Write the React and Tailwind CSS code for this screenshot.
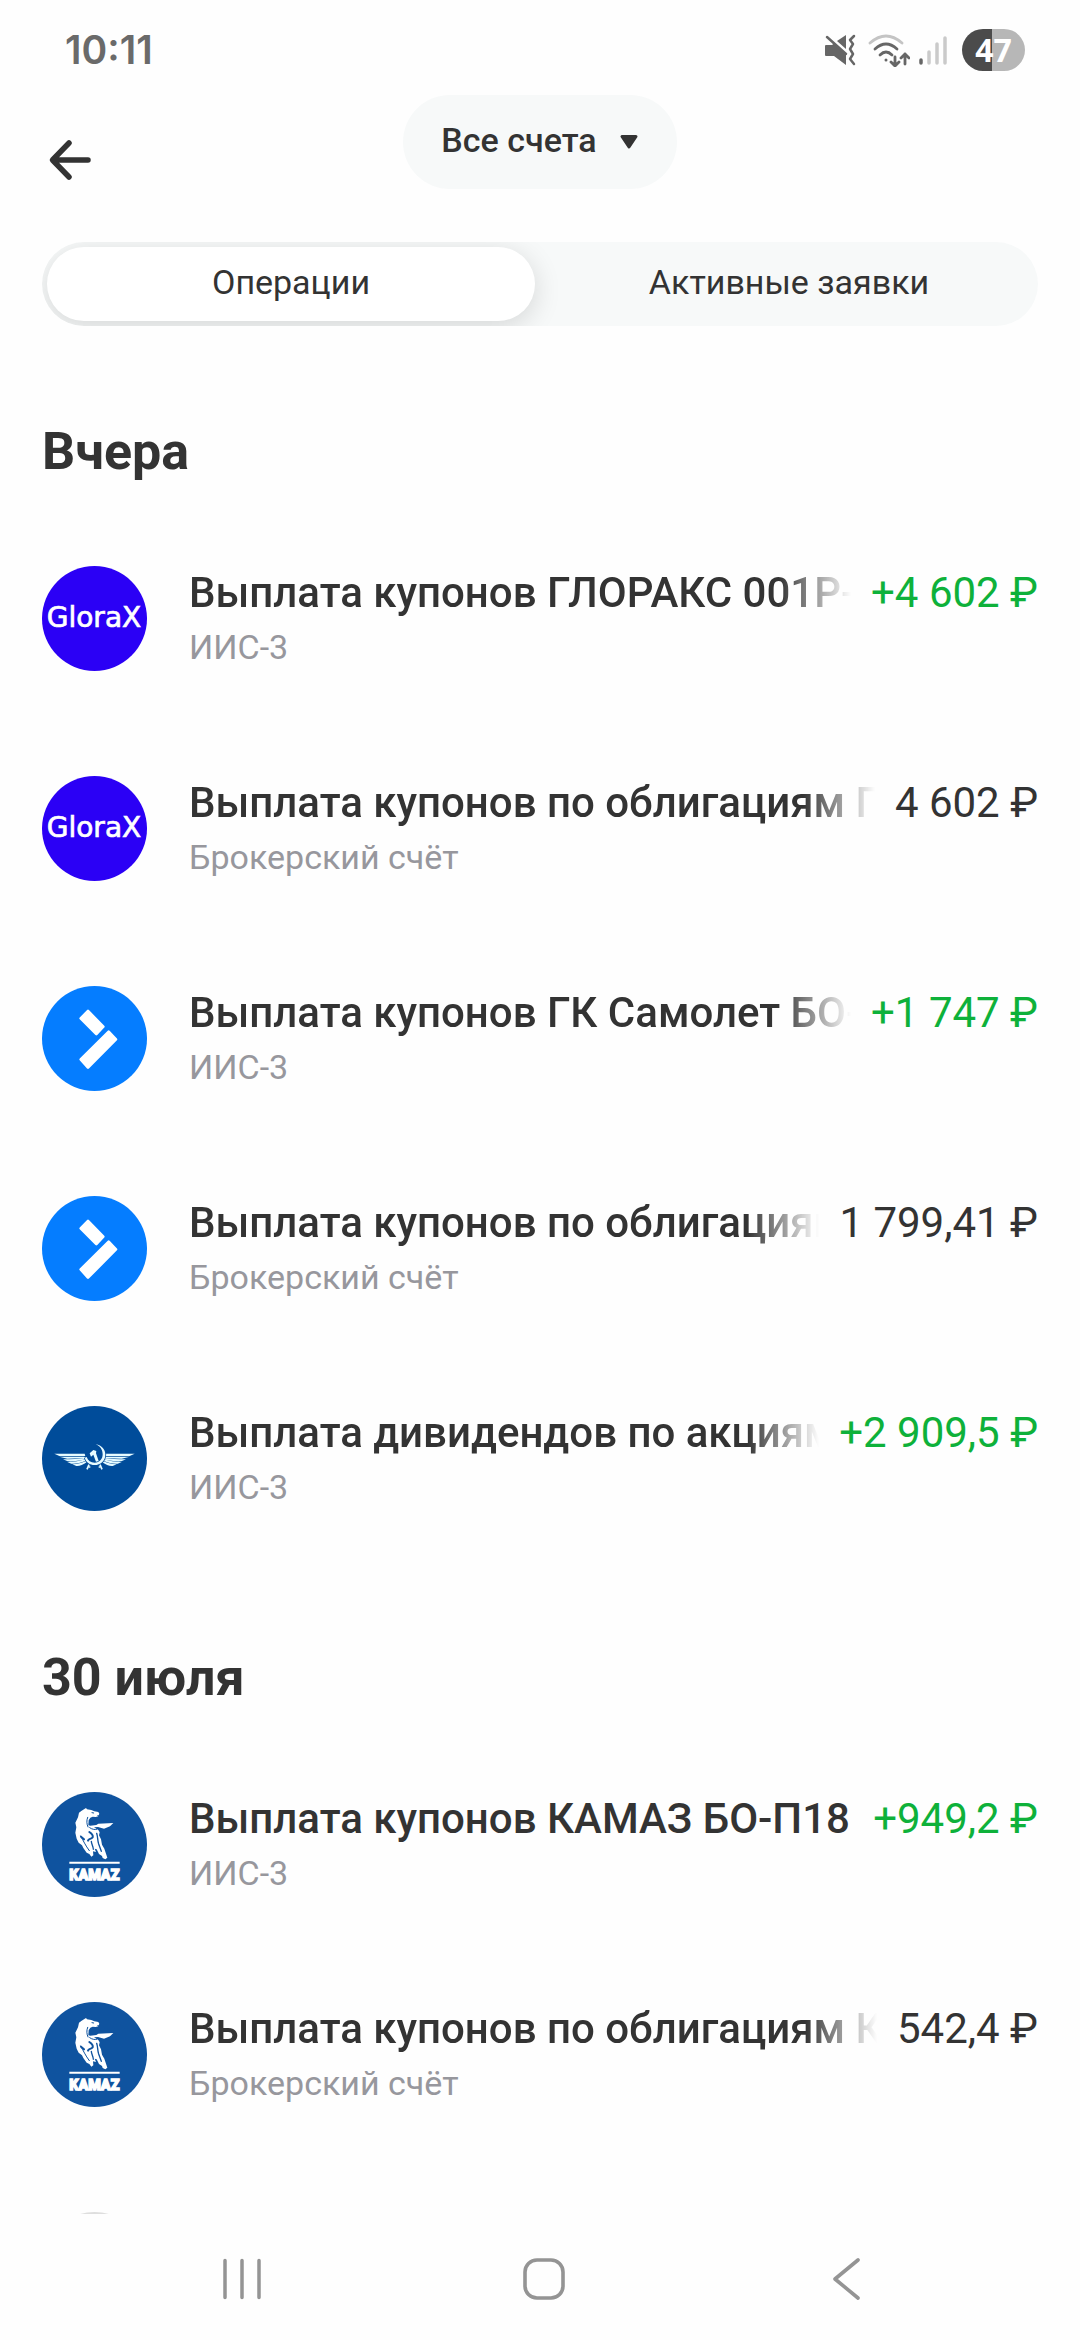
import { useState, useLayoutEffect, useRef } from "react";

const SECTIONS = [
  {
    title: "Вчера",
    items: [
      { id: 1, logo: "glorax", title: "Выплата купонов ГЛОРАКС 001Р-0", account: "ИИС-3", amount: "+4 602 ₽", income: true },
      { id: 2, logo: "glorax", title: "Выплата купонов по облигациям Г", account: "Брокерский счёт", amount: "4 602 ₽" },
      { id: 3, logo: "samolet", title: "Выплата купонов ГК Самолет БО-", account: "ИИС-3", amount: "+1 747 ₽", income: true },
      { id: 4, logo: "samolet", title: "Выплата купонов по облигациям", account: "Брокерский счёт", amount: "1 799,41 ₽" },
      { id: 5, logo: "aeroflot", title: "Выплата дивидендов по акциям", account: "ИИС-3", amount: "+2 909,5 ₽", income: true },
    ],
  },
  {
    title: "30 июля",
    items: [
      { id: 6, logo: "kamaz", title: "Выплата купонов КАМАЗ БО-П18", account: "ИИС-3", amount: "+949,2 ₽", income: true },
      { id: 7, logo: "kamaz", title: "Выплата купонов по облигациям К", account: "Брокерский счёт", amount: "542,4 ₽" },
    ],
  },
];

function GloraxLogo() {
  return (
    <svg viewBox="0 0 105 105" className="size-full">
      <circle cx="52.5" cy="52.5" r="52.5" fill="#2b00f5" />
      <text x="52" y="61" textAnchor="middle" fill="#fff" stroke="#fff" strokeWidth="0.7" fontFamily="DejaVu Sans, sans-serif" fontSize="28">
        GloraX
      </text>
    </svg>
  );
}

function SamoletLogo() {
  return (
    <svg viewBox="36 48 315 315" className="size-full">
      <circle cx="193.5" cy="205.5" r="157.5" fill="#057dff" />
      <g fill="#fff" stroke="#fff" strokeWidth="8" strokeLinejoin="round">
        <path d="M174 123 220 170 199 192 152 145Z" />
        <path d="M236 185 258 208 174 293 152 268Z" />
      </g>
    </svg>
  );
}

function AeroflotWing() {
  return (
    <g fill="#e6fbff">
      <path d="M73 191H164L166 198H88Z" />
      <path d="M88 200 163 200 165 204 112 206Z" />
      <path d="M99 208C125 208 145 206 163 204L165 208C148 213 128 215 113 214Z" />
      <path d="M112 216C132 216 150 213 166 208L167 212C152 219 137 222 124 221Z" />
      <path d="M127 223C142 223 156 218 168 213L170 217C159 225 148 229 139 228Z" />
    </g>
  );
}

function AeroflotLogo() {
  return (
    <svg viewBox="36 48 315 315" className="size-full">
      <circle cx="193.5" cy="205.5" r="157.5" fill="#004c9a" />
      <AeroflotWing />
      <g transform="translate(387 0) scale(-1 1)">
        <AeroflotWing />
      </g>
      {/* sickle and hammer */}
      <path d="M198 162C213 166 223 178 223 193C223 211 210 222 194 222C181 222 171 214 167 203" fill="none" stroke="#004c9a" strokeWidth="11" />
      <path d="M197 162C216 166 226 179 226 194C226 213 211 225 194 225C179 225 168 216 164 203L170 201C174 212 182 218 194 218C208 218 218 208 218 193C218 179 211 169 197 162Z" fill="#e6fbff" />
      <path d="M179 190 190 180 199 183 198 190 206 213 198 215 190 194 183 200Z" fill="#e6fbff" />
      <path d="M177 224 171 238M210 224 216 238" stroke="#e6fbff" strokeWidth="5" />
      <path d="M176 231H181M206 231H211" stroke="#e6fbff" strokeWidth="4" />
    </svg>
  );
}

function KamazLogo() {
  return (
    <svg viewBox="36 36 315 315" className="size-full">
      <circle cx="193.5" cy="193.5" r="157.5" fill="#0f539f" />
      {/* horse */}
      <path
        d="M162 88 168 84 171 88 184 90 193 94 205 96 208 101 206 106 200 106 205 109 197 111 188 110 181 113 176 121 175 136 181 137 199 135 205 131 250 129 240 139 222 146 204 141 192 142 205 150 209 157 207 166 213 178 216 194 223 206 232 233 226 238 218 234 216 228 207 222 200 208 194 206 198 216 189 214 190 226 184 230 178 222 170 218 160 204 156 196 146 188 140 176 136 158 139 142 136 128 144 112 147 98 155 92Z"
        fill="#fff"
      />
      <g fill="none" stroke="#0f539f" strokeLinecap="round">
        <path d="M173 112C169 122 170 132 174 141" strokeWidth="3" />
        <path d="M179 143C186 148 195 150 200 148" strokeWidth="3" />
        <path d="M152 168C160 182 166 196 178 212" strokeWidth="3" />
        <path d="M153 170 162 178" strokeWidth="6" />
        <path d="M178 156C184 160 190 166 188 172C182 178 176 176 174 182" strokeWidth="6" />
        <path d="M200 160C204 172 202 180 206 192L214 214" strokeWidth="4" />
        <path d="M184 184C184 192 190 200 190 208" strokeWidth="4" />
        <path d="M186 98 191 99" strokeWidth="3" />
      </g>
      <path d="M118 248H269" stroke="#fff" strokeWidth="6" />
      <text x="193" y="300" textAnchor="middle" fill="#fff" stroke="#fff" strokeWidth="4" fontFamily="Roboto, sans-serif" fontWeight="900" fontSize="43">
        KAMAZ
      </text>
    </svg>
  );
}

const LOGOS = { glorax: GloraxLogo, samolet: SamoletLogo, aeroflot: AeroflotLogo, kamaz: KamazLogo };

// One line of text that fades out only when it does not fit
function FadingTitle({ children }) {
  const ref = useRef(null);
  const [overflows, setOverflows] = useState(false);

  useLayoutEffect(() => {
    const check = () => {
      const el = ref.current;
      if (el) setOverflows(el.scrollWidth > el.clientWidth);
    };
    check();
    window.addEventListener("resize", check);
    return () => window.removeEventListener("resize", check);
  }, [children]);

  return (
    <h3
      ref={ref}
      className={
        overflows
          ? "min-w-0 flex-1 overflow-hidden whitespace-nowrap font-medium [mask-image:linear-gradient(to_left,transparent,black_72px)]"
          : "min-w-0 flex-1 overflow-hidden whitespace-nowrap font-medium"
      }
    >
      {children}
    </h3>
  );
}

function OperationRow({ item }) {
  const Logo = LOGOS[item.logo];
  return (
    <li className="flex items-center gap-[42px]">
      <div className="size-[105px] shrink-0">
        <Logo />
      </div>
      <div className="min-w-0 flex-1 pb-0.5">
        <div className="flex gap-5 text-[42px] leading-[52px]">
          <FadingTitle>{item.title}</FadingTitle>
          <span className={item.income ? "whitespace-nowrap text-[#0eb13a]" : "whitespace-nowrap"}>{item.amount}</span>
        </div>
        <p className="mt-1.5 text-[34px] leading-[44px] text-[#97979d]">{item.account}</p>
      </div>
    </li>
  );
}

function StatusBar() {
  return (
    <div className="flex h-[95px] items-start justify-between pt-[29px] pr-[55px] pl-[65px] font-['Inter',sans-serif]">
      <span className="text-[39px] leading-[42px] font-semibold text-[#6a6a6a]">10:11</span>
      <div className="flex h-[42px] items-center">
        {/* sound off, vibrate */}
        <svg viewBox="0 0 32 32" className="mr-3 size-8" fill="#666">
          <path d="M2 11H8L10 9.500 22 21V31L10 22H2Q1 22 1 21V12Q1 11 2 11Z" />
          <path d="M13 7 22 1V15Z" />
          <path d="M3 3 22 20" stroke="#666" strokeWidth="2.500" strokeLinecap="round" />
          <path d="M30 2 26 6 29 10 26 15 29 20 26 25 30 30" fill="none" stroke="#666" strokeWidth="2.500" strokeLinejoin="round" strokeLinecap="round" />
        </svg>
        {/* wifi */}
        <svg viewBox="0 0 42 34" className="mr-2 h-[34px] w-[42px]" fill="none" strokeWidth="2.800" strokeLinecap="round" strokeLinejoin="round">
          <path d="M2 10Q18-4 34 10" stroke="#c4c4c4" />
          <path d="M7 16Q18 6 29 16" stroke="#666" />
          <path d="M12 22Q18 16 24 22" stroke="#666" />
          <circle cx="18" cy="27" r="1.500" fill="#666" stroke="none" />
          <path d="M27 24V33M23 29 27 33 31 29M37 31V21M33 25 37 21 41 25" stroke="#666" />
        </svg>
        {/* signal */}
        <svg viewBox="0 0 30 32" className="mr-3.5 h-8 w-[30px]" stroke="#cacaca" strokeWidth="3.500" strokeLinecap="round">
          <path d="M3 26V29" stroke="#666" />
          <path d="M11 18V29M19 10V29M27 4V29" />
        </svg>
        <div className="flex h-[42px] w-[63px] items-center justify-center rounded-full bg-[linear-gradient(to_right,#4b4b4b_47%,#b7b7b7_47%)] font-['Open_Sans',sans-serif] text-[32px] leading-none font-bold text-white">
          47
        </div>
      </div>
    </div>
  );
}

function NavBar() {
  return (
    <nav className="grid h-[126px] shrink-0 grid-cols-3 pt-1 pr-[83px] pl-[91px]">
      <button aria-label="Недавние" className="flex items-center justify-center">
        <svg viewBox="0 0 42 42" className="size-[42px]" stroke="#949494" strokeWidth="3.500" strokeLinecap="round">
          <path d="M4 2.500V39.500M21 2.500V39.500M38 2.500V39.500" />
        </svg>
      </button>
      <button aria-label="Домой" className="flex items-center justify-center">
        <svg viewBox="0 0 42 42" className="size-[42px]" fill="none" stroke="#949494" strokeWidth="3.600">
          <rect x="2" y="2" width="38" height="38" rx="12" />
        </svg>
      </button>
      <button aria-label="Назад" className="flex items-center justify-center">
        <svg viewBox="0 0 42 42" className="size-[42px]" fill="none" stroke="#949494" strokeWidth="3.600" strokeLinecap="round" strokeLinejoin="round">
          <path d="M33 2 10 21 33 40" />
        </svg>
      </button>
    </nav>
  );
}

export default function App() {
  const [tab, setTab] = useState("operations");

  const tabClass = (active) =>
    active
      ? "flex-1 rounded-full bg-white pb-1 shadow-[0_6px_28px_rgba(0,0,0,0.14)]"
      : "flex-1 rounded-full pb-1";

  return (
    <div className="flex h-screen flex-col bg-[#fefefe] font-['Roboto',sans-serif] text-[#333]">
      <StatusBar />

      <header className="grid h-[130px] shrink-0 grid-cols-[1fr_auto_1fr] px-[42px]">
        <button aria-label="Назад" className="size-14 self-center">
          <svg viewBox="0 0 56 56" className="size-full" fill="none" stroke="#333" strokeWidth="5.500" strokeLinecap="round" strokeLinejoin="round">
            <path d="M46 28H11M27 11 10.500 28 27 45" />
          </svg>
        </button>
        <button className="flex h-[94px] items-center gap-[22px] rounded-full bg-[#f7f9f9] px-[38px] text-[34px] font-medium">
          <span className="pb-1">Все счета</span>
          <svg viewBox="0 0 20 18" className="h-[18px] w-5" fill="#333" stroke="#333" strokeWidth="3" strokeLinejoin="round">
            <path d="M3 3.500H17L10 14Z" />
          </svg>
        </button>
      </header>

      <div className="px-[42px] pt-[17px]">
        <div role="tablist" className="flex h-[84px] gap-2.5 overflow-hidden rounded-full bg-[#f7f9f9] p-[5px] text-[34px]">
          <button role="tab" aria-selected={tab === "operations"} onClick={() => setTab("operations")} className={tabClass(tab === "operations")}>
            Операции
          </button>
          <button role="tab" aria-selected={tab === "orders"} onClick={() => setTab("orders")} className={tabClass(tab === "orders")}>
            Активные заявки
          </button>
        </div>
      </div>

      <main className="min-h-0 flex-1 overflow-y-auto px-[42px] pt-24 [scrollbar-width:none]">
        {SECTIONS.map((section) => (
          <section key={section.title} className="mb-[137px] last-of-type:mb-[105px]">
            <h2 className="mb-[84px] text-[52px] leading-[60px] font-bold">{section.title}</h2>
            <ul className="flex flex-col gap-[105px]">
              {section.items.map((item) => (
                <OperationRow key={item.id} item={item} />
              ))}
            </ul>
          </section>
        ))}
        {/* Next page placeholder */}
        <div className="size-[105px] rounded-full bg-[#dedede]" />
      </main>

      <NavBar />
    </div>
  );
}
